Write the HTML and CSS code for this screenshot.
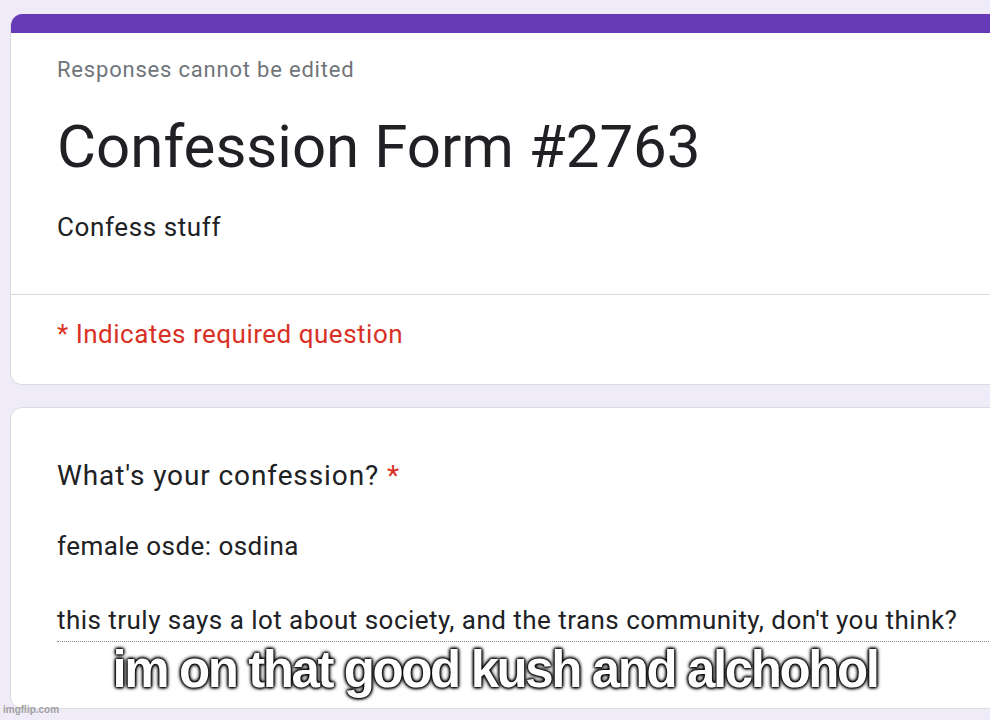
FILE: index.html
```html
<!DOCTYPE html>
<html>
<head>
<meta charset="utf-8">
<link rel="stylesheet" href="styles.css">
</head>
<body>
<div class="page">
  <div class="card header-card">
    <div class="accent"></div>
    <div class="header-top">
      <div class="notice">Responses cannot be edited</div>
      <h1 class="title">Confession Form #2763</h1>
      <div class="desc">Confess stuff</div>
    </div>
    <div class="header-bottom">
      <div class="required">* Indicates required question</div>
    </div>
  </div>
  <div class="card question-card">
    <div class="q-title">What's your confession? <span class="star">*</span></div>
    <div class="answer">
      <p class="line">female osde: osdina</p>
      <p class="line">this truly says a lot about society, and the trans community, don't you think?</p>
    </div>
  </div>
</div>
<div class="caption">im on that good kush and alchohol</div>
<div class="watermark">imgflip.com</div>
</body>
</html>
```
FILE: styles.css
```css
html, body {
  margin: 0;
  padding: 0;
}
body {
  background: #efebf8;
  width: 990px;
  height: 720px;
  overflow: hidden;
  position: relative;
  font-family: Roboto, "Liberation Sans", sans-serif;
}
.page {
  padding: 14px 0 0 10px;
  display: flex;
  flex-direction: column;
  gap: 22px;
}
.card {
  width: 1100px;
  background: #fff;
  border: 1px solid #dadce0;
  border-radius: 12px;
  box-sizing: border-box;
}
.header-card {
  overflow: hidden;
  border-top: none;
}
.accent {
  height: 19px;
  background: #673ab7;
}
.header-top {
  padding: 22px 0 0 46px;
  height: 262px;
  box-sizing: border-box;
  border-bottom: 1px solid #dadce0;
}
.notice {
  font-size: 22px;
  letter-spacing: 0.8px;
  line-height: 30px;
  color: #70757a;
}
.title {
  margin: 24px 0 0 0;
  font-weight: 400;
  font-size: 60px;
  line-height: 76px;
  color: #202124;
}
.desc {
  margin-top: 25px;
  font-size: 26px;
  letter-spacing: 0.6px;
  line-height: 34px;
  color: #202124;
}
.header-bottom {
  height: 89px;
  padding: 22px 0 0 46px;
  box-sizing: border-box;
}
.required {
  font-size: 26px;
  letter-spacing: 0.5px;
  line-height: 34px;
  color: #d93025;
}
.question-card {
  height: 302px;
  padding: 50px 0 0 46px;
}
.q-title {
  font-size: 28px;
  letter-spacing: 0.9px;
  line-height: 36px;
  color: #202124;
}
.star {
  color: #d93025;
}
.answer {
  margin-top: 33px;
  padding-bottom: 2px;
  border-bottom: 1px dotted #8a8a8a;
  font-size: 26px;
  letter-spacing: 0.46px;
  color: #202124;
}
.line {
  margin: 0;
  line-height: 38px;
}
.line + .line {
  margin-top: 36px;
}
.caption {
  position: absolute;
  left: 0;
  right: 0;
  top: 640px;
  text-align: center;
  font-family: "Liberation Sans", Arial, sans-serif;
  font-weight: 700;
  font-size: 51px;
  letter-spacing: -2.4px;
  line-height: 60px;
  color: #fff;
  text-shadow: 0 0 2px #000, 0 0 3px #000, 0 0 3px #000, 0 0 4px #000, 0 0 4px #000;
}
.watermark {
  position: absolute;
  left: 3px;
  top: 704px;
  font-family: "Liberation Sans", Arial, sans-serif;
  font-weight: 700;
  font-size: 10px;
  color: #9f9f9f;
}
```
